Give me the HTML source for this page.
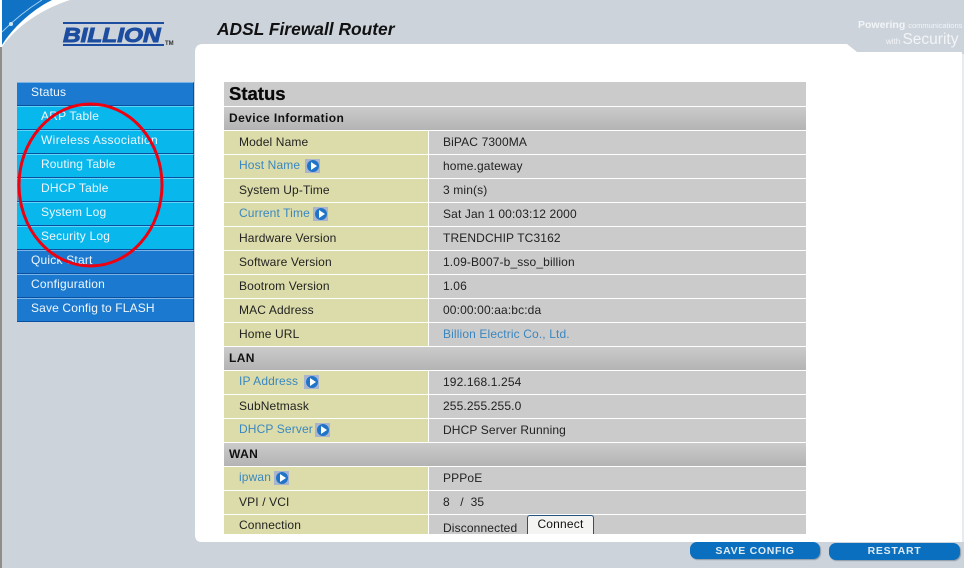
<!DOCTYPE html>
<html><head><meta charset="utf-8"><style>
html,body{margin:0;padding:0}
body{width:964px;height:568px;position:relative;overflow:hidden;background:#ccd3db;font-family:"Liberation Sans",sans-serif;font-size:12px}
div,a,span{position:absolute;white-space:nowrap;box-sizing:border-box}
.m{left:17px;width:177px;height:24px;color:#f0f6fc;font-size:12px;line-height:19px;letter-spacing:.2px}
.d{background:#1b7ad0;border-top:1px solid #7ab4e6;border-bottom:1px solid #0b4fa0;border-right:1px solid #0b4fa0;padding-left:14px}
.l{background:#08b7ec;border-top:1px solid #5fd4f5;border-bottom:1px solid #0b4fa0;border-right:1px solid #0b4fa0;padding-left:24px}
.lb{left:224px;width:204px;height:23px;background:#dcdcaa;color:#222;line-height:22px;padding-left:15px;letter-spacing:.13px}
.v{left:429px;width:377px;height:23px;background:#cbcbcb;color:#222;line-height:22px;padding-left:14px;letter-spacing:.13px}
.h{left:224px;width:582px;height:23px;background:linear-gradient(#cbcbcb,#b4b4b4);color:#111;font-weight:bold;line-height:23px;padding-left:5px;letter-spacing:.4px}
.u{color:#3a87c0;position:static}
.i{width:15px;height:14px;background:#a9b4cf;top:4px}
.i:before{content:"";position:absolute;left:2px;top:1px;width:12px;height:12px;border-radius:50%;background:#1f74c8}
.i:after{content:"";position:absolute;left:6px;top:3px;border-left:6px solid #fff;border-top:4px solid transparent;border-bottom:4px solid transparent}
.b{top:542px;height:17px;background:#0a6fbe;border-radius:7px;box-shadow:1px 1px 1px #8b9aa8;color:#dfeaf3;font-weight:bold;font-size:10.5px;text-align:center;line-height:17px;letter-spacing:.7px}
</style></head><body>
<div style="left:0;top:0;width:2px;height:568px;background:#8e8e86"></div>

<svg style="position:absolute;left:0;top:0" width="80" height="60" viewBox="0 0 80 60">
<path d="M2 47 C14 30 36 11 70 0 L0 0 L0 47Z" fill="#fff"/>
<path d="M2 45 C12 29 30 11 52 0 L2 0Z" fill="#0f72c4"/>
<path d="M2 32 C14 20 26 10 42 0" fill="none" stroke="#9fd0f2" stroke-width="1"/>
<circle cx="11" cy="24" r="2" fill="#cfe8fa"/>
</svg>

<div style="left:63px;top:22px;width:101px;height:2px;background:#1c4da0"></div>
<div style="left:63px;top:44px;width:101px;height:2px;background:#1c4da0"></div>
<div style="left:63px;top:26px;font:italic bold 20px/20px 'Liberation Sans',sans-serif;color:#1c4da0;-webkit-text-stroke:.9px #1c4da0;transform:scaleX(1.22);transform-origin:left">BILLION</div>
<div style="left:165px;top:40px;font:bold 6px/8px 'Liberation Sans',sans-serif;color:#333">TM</div>

<div style="left:217px;top:18px;font:italic bold 17.4px/22px 'Liberation Sans',sans-serif;color:#111">ADSL Firewall Router</div>

<svg style="position:absolute;left:195px;top:44px" width="769" height="498" viewBox="0 0 769 498">
<path d="M8 0 H652 L662 8 H767 V498 H7 Q0 498 0 491 V8 Q0 0 8 0Z" fill="#fff"/>
</svg>
<div style="left:962px;top:54px;width:2px;height:488px;background:#e6ebf2"></div>
<div style="left:858px;top:20px;font:bold 10.5px/11px 'Liberation Sans',sans-serif;color:#f2f5f8">Powering <span style="position:static;font-weight:normal;font-size:7.5px">communications</span></div>
<div style="left:886px;top:31px;font:8px/17px 'Liberation Sans',sans-serif;color:#f2f5f8">with <span style="position:static;font-size:15.5px">Security</span></div>

<div class="m d" style="top:82px">Status</div>
<div class="m l" style="top:106px">ARP Table</div>
<div class="m l" style="top:130px;letter-spacing:.35px">Wireless Association</div>
<div class="m l" style="top:154px;letter-spacing:.1px">Routing Table</div>
<div class="m l" style="top:178px">DHCP Table</div>
<div class="m l" style="top:202px">System Log</div>
<div class="m l" style="top:226px">Security Log</div>
<div class="m d" style="top:250px">Quick Start</div>
<div class="m d" style="top:274px">Configuration</div>
<div class="m d" style="top:298px;letter-spacing:.15px">Save Config to FLASH</div>

<svg style="position:absolute;left:0;top:0" width="200" height="290"><ellipse cx="90.500" cy="185" rx="71.500" ry="81" fill="none" stroke="#ee0010" stroke-width="3"/></svg>

<div style="left:224px;top:82px;width:582px;height:24px;background:#cbcbcb;font:bold 18.5px/24px 'Liberation Sans',sans-serif;color:#0a0a0a;padding-left:5px;-webkit-text-stroke:.3px #0a0a0a">Status</div>
<div class="h" style="top:107px">Device Information</div>

<div class="lb" style="top:131px">Model Name</div><div class="v" style="top:131px">BiPAC 7300MA</div>
<div class="lb" style="top:155px;line-height:20px"><span class="u">Host Name</span><span class="i" style="left:81px"></span></div><div class="v" style="top:155px">home.gateway</div>
<div class="lb" style="top:179px">System Up-Time</div><div class="v" style="top:179px">3 min(s)</div>
<div class="lb" style="top:203px;line-height:20px"><span class="u">Current Time</span><span class="i" style="left:89px"></span></div><div class="v" style="top:203px">Sat Jan 1 00:03:12 2000</div>
<div class="lb" style="top:227px">Hardware Version</div><div class="v" style="top:227px">TRENDCHIP TC3162</div>
<div class="lb" style="top:251px">Software Version</div><div class="v" style="top:251px">1.09-B007-b_sso_billion</div>
<div class="lb" style="top:275px">Bootrom Version</div><div class="v" style="top:275px">1.06</div>
<div class="lb" style="top:299px">MAC Address</div><div class="v" style="top:299px">00:00:00:aa:bc:da</div>
<div class="lb" style="top:323px">Home URL</div><div class="v" style="top:323px"><span class="u">Billion Electric Co., Ltd.</span></div>

<div class="h" style="top:347px">LAN</div>
<div class="lb" style="top:371px;line-height:20px"><span class="u">IP Address</span><span class="i" style="left:80px"></span></div><div class="v" style="top:371px">192.168.1.254</div>
<div class="lb" style="top:395px">SubNetmask</div><div class="v" style="top:395px">255.255.255.0</div>
<div class="lb" style="top:419px;line-height:20px"><span class="u">DHCP Server</span><span class="i" style="left:91px"></span></div><div class="v" style="top:419px">DHCP Server Running</div>

<div class="h" style="top:443px">WAN</div>
<div class="lb" style="top:467px;line-height:20px"><span class="u">ipwan</span><span class="i" style="left:50px"></span></div><div class="v" style="top:467px">PPPoE</div>
<div class="lb" style="top:491px">VPI / VCI</div><div class="v" style="top:491px">8 &nbsp; / &nbsp;35</div>
<div class="lb" style="top:515px;height:19px;line-height:21px">Connection</div>
<div class="v" style="top:515px;height:19px;line-height:27px;overflow:hidden">Disconnected</div>
<div style="left:527px;top:515px;width:67px;height:19px;background:#f4f4f2;border:1px solid #23557f;border-bottom:0;border-radius:3px 3px 0 0;color:#111;text-align:center;line-height:17px;letter-spacing:.2px">Connect</div>

<div class="b" style="left:690px;width:130px;line-height:18px">SAVE CONFIG</div>
<div class="b" style="left:829px;width:131px;top:543px;line-height:17px">RESTART</div>
</body></html>
